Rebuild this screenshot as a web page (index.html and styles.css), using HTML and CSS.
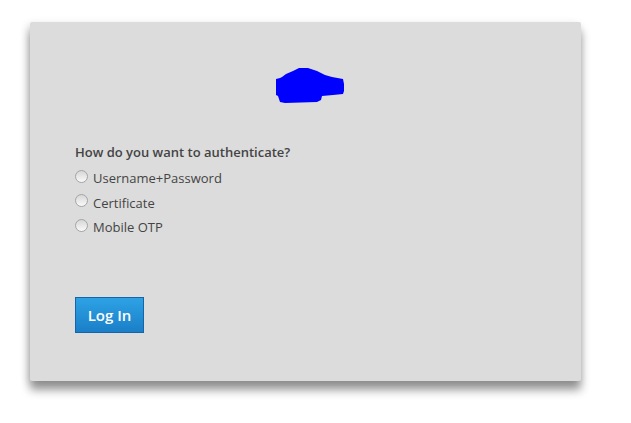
FILE: index.html
```html
<!DOCTYPE html>
<html lang="en">
<head>
  <meta charset="UTF-8" />
  <title>Login</title>
  <link rel="stylesheet" href="styles.css">
</head>
<body>
<div class="login-box">
  <div class="logo">
    <svg width="71" height="39" viewBox="0 0 71 39">
      <path d="M7,11 L11,8 L18,5 L24,2 L33,2 L42,5 L50,9 L57,11 L68,13 L69,18 L69,25 L68,28 L58,29 L47,30 L46,34 L42,36 L10,37 L5,36 L4,33 L3,30 L1,29 L1,13 L5,12 Z" fill="#0000ff"/>
    </svg>
  </div>
  <form class="auth-form">
    <div class="question">How do you want to authenticate?</div>
    <label class="option"><input type="radio" name="auth"> Username+Password</label>
    <label class="option"><input type="radio" name="auth"> Certificate</label>
    <label class="option"><input type="radio" name="auth"> Mobile OTP</label>
    <button type="button" class="login-btn">Log In</button>
  </form>
</div>
</body>
</html>
```

FILE: styles.css
```css
body {
  margin: 0;
  min-height: 100vh;
  box-sizing: border-box;
  padding: 22px 0 0 30px;
  background: white;
  font-family: "Open Sans", sans-serif;
}
.login-box {
  width: 551px;
  height: 359px;
  box-sizing: border-box;
  background: #dcdcdc;
  border-radius: 2px;
  padding: 44px 45px;
  box-shadow: 0 9px 10px rgba(0, 0, 0, 0.4), -2px 2px 8px rgba(0, 0, 0, 0.12);
}
.logo {
  display: flex;
  justify-content: center;
  padding-left: 10px;
  height: 39px;
}
.auth-form {
  display: flex;
  flex-direction: column;
  align-items: flex-start;
  margin-top: 38px;
  color: #444;
}
.question {
  font-size: 13px;
  font-weight: 600;
  line-height: 18px;
  margin-bottom: 5px;
}
.option {
  display: flex;
  align-items: center;
  font-size: 13px;
  line-height: 24px;
  height: 24.5px;
}
.option input {
  appearance: none;
  margin: 0 5px 4px 0;
  width: 13px;
  height: 13px;
  border-radius: 50%;
  border: 1px solid #a4a4a4;
  background: linear-gradient(#d6d6d6, #fafafa);
  box-sizing: border-box;
}
.login-btn {
  margin-top: 57px;
  width: 69px;
  height: 36px;
  font-family: "Open Sans", sans-serif;
  font-size: 15px;
  font-weight: 600;
  color: white;
  background: linear-gradient(#2ea2e5, #1a7fc8);
  border: 1px solid #1565a8;
  border-radius: 0;
  cursor: pointer;
}
```
